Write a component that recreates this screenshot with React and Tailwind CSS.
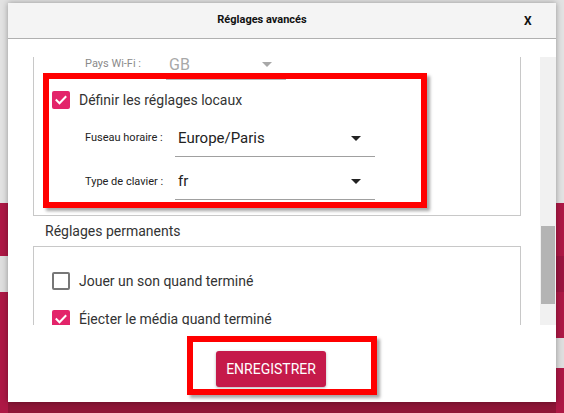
import React from "react";

function Check({ checked }) {
  if (checked) {
    return (
      <div className="w-[18px] h-[18px] rounded-[2px] bg-[#e3246a] flex items-center justify-center shrink-0">
        <svg width="14" height="14" viewBox="0 0 14 14">
          <path d="M2.5 7.2l3 3 6-6.2" fill="none" stroke="#fff" strokeWidth="2" strokeLinecap="square" />
        </svg>
      </div>
    );
  }
  return <div className="w-[18px] h-[18px] rounded-[2px] border-2 border-[#777] shrink-0" />;
}

function Arrow({ color }) {
  return (
    <svg width="10" height="5" viewBox="0 0 10 5" className="shrink-0">
      <path d="M0 0h10L5 5z" fill={color} />
    </svg>
  );
}

export default function App() {
  return (
    <div className="relative w-[564px] h-[413px] overflow-hidden bg-[#e2e2e2] font-['Roboto',sans-serif]">
      {/* backdrop: the app behind the modal */}
      <div className="absolute inset-0 flex">
        <div className="w-[8px] flex flex-col">
          <div className="h-[203px] bg-[#e2e2e2]" />
          <div className="h-[53px] bg-[#ad1845]" />
          <div className="h-[36px] bg-[#dedede]" />
          <div className="flex-1 bg-[#ad1845]" />
        </div>
        <div className="flex-1 flex flex-col">
          <div className="h-[402px]" />
          <div className="flex-1 bg-[#8e1537]" />
        </div>
        <div className="w-[8px] flex flex-col">
          <div className="h-[203px] bg-[#e2e2e2]" />
          <div className="h-[53px] bg-[#ad1845]" />
          <div className="h-[36px] bg-[#9a1540]" />
          <div className="h-[46px] bg-[#ad1845]" />
          <div className="h-[30px] bg-[#dedede]" />
          <div className="flex-1 bg-[#ad1845]" />
        </div>
      </div>

      {/* dialog */}
      <div className="absolute left-[8px] top-[3px] w-[548px] h-[399px] bg-white shadow-[0_0_6px_rgba(0,0,0,0.35)] flex flex-col">
        <div className="h-[36px] shrink-0 bg-[#f4f4f4] border-b border-[#b0b0b0] flex items-center">
          <div className="flex-1 text-center text-[11px] font-bold text-[#111]">Réglages avancés</div>
          <div className="w-[40px] pl-[8px] text-[12px] font-bold text-[#111]">X</div>
        </div>
        <div className="h-[286px] shrink-0 flex">
          <div className="flex-1 overflow-hidden pl-[25px] pr-[19px] flex flex-col">
            <div className="h-[18px] shrink-0" />
            {/* box 1 */}
            <div className="h-[159px] shrink-0 border-x border-b border-[#c8c8c8] flex flex-col">
              <div className="h-[23px] shrink-0 flex pl-[51px]">
                <div className="w-[81px] flex items-center pb-[9px] text-[11px] text-[#8a8a8a]">Pays Wi-Fi :</div>
                <div className="w-[120px] h-full border-b border-[#b8b8b8] flex items-center justify-between pb-[7px] pl-[3px] pr-[14px]">
                  <span className="text-[16px] leading-[16px] text-[#a8a8a8]">GB</span>
                  <Arrow color="#a8a8a8" />
                </div>
              </div>
              <div className="h-[40px] shrink-0 flex items-center pl-[18px] gap-[9px]">
                <Check checked />
                <span className="text-[14px] text-[#333]">Définir les réglages locaux</span>
              </div>
              <div className="h-[37px] shrink-0 flex pl-[51px]">
                <div className="w-[90px] flex items-center text-[11px] text-[#222]">Fuseau horaire :</div>
                <div className="w-[200px] h-full border-b border-[#a0a0a0] flex items-center justify-between pl-[3px] pr-[14px]">
                  <span className="text-[15px] text-[#222]">Europe/Paris</span>
                  <Arrow color="#222" />
                </div>
              </div>
              <div className="h-[43px] shrink-0 pt-[7px] flex pl-[51px]">
                <div className="w-[90px] flex items-center text-[11px] text-[#222]">Type de clavier :</div>
                <div className="w-[200px] h-full border-b border-[#a0a0a0] flex items-center justify-between pl-[3px] pr-[14px]">
                  <span className="text-[15px] text-[#222]">fr</span>
                  <Arrow color="#222" />
                </div>
              </div>
            </div>
            {/* label */}
            <div className="h-[30px] shrink-0 flex items-center pl-[12px] text-[14px] text-[#333]">Réglages permanents</div>
            {/* box 2 */}
            <div className="shrink-0 border-x border-t border-[#c8c8c8] pt-[16px] pl-[18px] flex flex-col gap-[2px]">
              <div className="h-[36px] flex items-center gap-[9px]">
                <Check checked={false} />
                <span className="text-[14px] text-[#333]">Jouer un son quand terminé</span>
              </div>
              <div className="h-[36px] flex items-center gap-[9px]">
                <Check checked />
                <span className="text-[14px] text-[#333]">Éjecter le média quand terminé</span>
              </div>
              <div className="h-[36px]" />
            </div>
          </div>
          <div className="w-[16px] shrink-0 mt-[18px] bg-[#f1f1f1] flex flex-col px-[1px]">
            <div className="h-[169px] shrink-0" />
            <div className="h-[78px] shrink-0 bg-[#b4b4b4]" />
          </div>
        </div>
        <div className="flex-1 flex justify-center items-start pt-[26px] pr-[22px]">
          <div className="w-[110px] h-[36px] rounded-[3px] bg-[#c51a4a] shadow-[0_1px_3px_rgba(0,0,0,0.3)] flex items-center justify-center text-[14px] text-white">
            ENREGISTRER
          </div>
        </div>
      </div>

      {/* red annotation boxes */}
      <div className="absolute left-[43px] top-[73px] w-[384px] h-[135px] border-[6px] border-[#ff0000] shadow-[3px_3px_3px_rgba(0,0,0,0.35)]" />
      <div className="absolute left-[187px] top-[336px] w-[190px] h-[59px] border-[6px] border-[#ff0000] shadow-[3px_3px_3px_rgba(0,0,0,0.35)]" />
    </div>
  );
}
